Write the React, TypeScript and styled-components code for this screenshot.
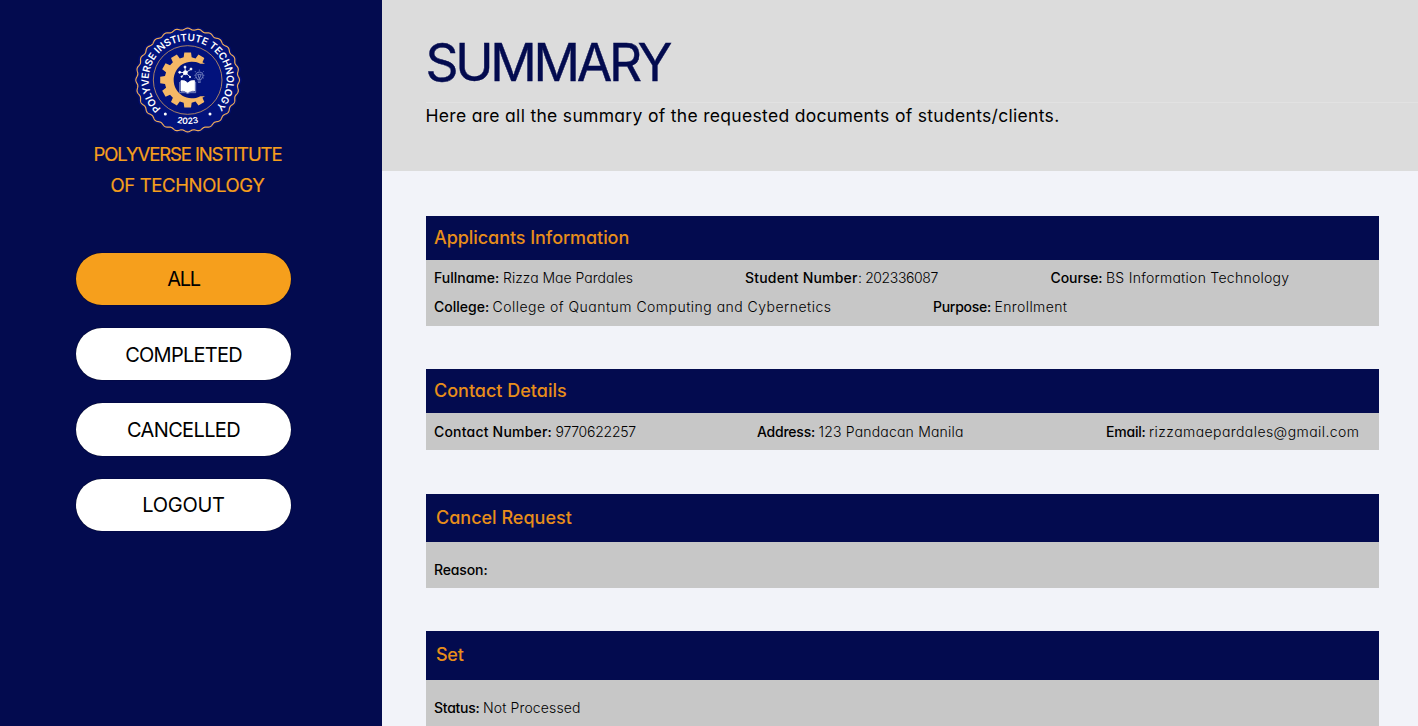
import React from "react";
import styled, { createGlobalStyle } from "styled-components";

const navy = "#030b4f";
const orange = "#f69f1c";

const GlobalStyle = createGlobalStyle`
  * { box-sizing: border-box; }
  body {
    margin: 0;
    background: #f2f3f9;
    font-family: Inter, "Liberation Sans", sans-serif;
    font-feature-settings: "cv11";
    color: #000;
    overflow: hidden;
  }
`;

const Page = styled.div`
  display: flex;
  height: 726px;
  overflow: hidden;
`;

const Sidebar = styled.aside`
  flex: 0 0 382px;
  display: flex;
  flex-direction: column;
  align-items: center;
  padding: 20px 7px 0 0;
  background: ${navy};
`;

const Seal = styled.svg`
  width: 125px;
  height: 118px;
  display: block;
`;

const SchoolName = styled.h2`
  margin: 1px 0 0;
  font-size: 18.5px;
  font-weight: 400;
  line-height: 30.5px;
  color: ${orange};
  -webkit-text-stroke: 0.2px ${orange};
`;

const NameLine = styled.span<{ $tracking: number }>`
  display: block;
  text-align: center;
  letter-spacing: ${(p) => p.$tracking}px;
`;

const Menu = styled.nav`
  display: flex;
  flex-direction: column;
  gap: 23px;
  margin: 52.5px 8px 0 0;
`;

const MenuButton = styled.button<{ $active?: boolean; $tracking: number }>`
  width: 215px;
  height: 52.4px;
  padding: 1px 0 0;
  border: 0;
  border-radius: 27px;
  background: ${(p) => (p.$active ? orange : "#fff")};
  box-shadow: 0 0 1px #000;
  color: #000;
  font: 400 20px Inter, sans-serif;
  letter-spacing: ${(p) => p.$tracking}px;
`;

const Main = styled.main`
  flex: 1;
  display: flex;
  flex-direction: column;
`;

const Banner = styled.header`
  height: 170.6px;
  flex: none;
  padding: 23px 0 0 43.5px;
  background: #dcdcdc;
`;

const Title = styled.h1`
  height: 80px;
  margin: 0;
  border-bottom: 1px solid #e2e2e2;
  font-size: 51.5px;
  font-weight: 400;
  line-height: 79px;
  letter-spacing: -3.3px;
  color: ${navy};
  -webkit-text-stroke: 0.4px ${navy};
`;

const Subtitle = styled.p`
  margin: 0;
  font-size: 17.5px;
  line-height: 26px;
  letter-spacing: 0.31px;
`;

const Sections = styled.div`
  display: flex;
  flex-direction: column;
  gap: 43.3px;
  padding: 45px 39.5px 0 43.5px;
`;

const Card = styled.section`
  display: flex;
  flex-direction: column;
  flex: none;
  background: #c7c7c7;
`;

const CardTitle = styled.h3<{ $tall?: boolean; $tracking?: number }>`
  height: ${(p) => (p.$tall ? 48.6 : 44)}px;
  margin: 0;
  padding-left: ${(p) => (p.$tall ? 10.5 : 8.5)}px;
  background: ${navy};
  font-size: 18px;
  font-weight: 500;
  line-height: ${(p) => (p.$tall ? 48.6 : 44)}px;
  letter-spacing: ${(p) => p.$tracking ?? 0}px;
  color: #e88e1a;
`;

const CardBody = styled.div<{ $height: number; $top: number }>`
  height: ${(p) => p.$height}px;
  padding: ${(p) => p.$top}px 0 0 8.5px;
`;

const Row = styled.div<{ $columns?: string }>`
  display: grid;
  grid-template-columns: ${(p) => p.$columns ?? "1fr"};
  height: 29px;
  line-height: 29px;
  font-size: 14px;
`;

const Item = styled.div`
  display: flex;
  white-space: nowrap;
`;

const Label = styled.strong<{ $width: number; $tracking: number }>`
  width: ${(p) => p.$width}px;
  font-weight: 500;
  letter-spacing: ${(p) => p.$tracking}px;
`;

const Value = styled.span<{ $tracking: number }>`
  font-weight: 300;
  letter-spacing: ${(p) => p.$tracking}px;
`;

type FieldProps = {
  label: string;
  width: number;
  labelTracking?: number;
  value?: string;
  tracking?: number;
};

function Field({ label, width, labelTracking = 0, value, tracking = 0 }: FieldProps) {
  return (
    <Item>
      <Label $width={width} $tracking={labelTracking}>{label}</Label>
      {value && <Value $tracking={tracking}>{value}</Value>}
    </Item>
  );
}

const CX = 188;
const CY = 180;

function polar(r: number, deg: number) {
  const a = (deg * Math.PI) / 180;
  return `${(CX + r * Math.cos(a)).toFixed(1)} ${(CY + r * Math.sin(a)).toFixed(1)}`;
}

function wavyRing(radius: number, amplitude: number, waves: number) {
  const points: string[] = [];
  for (let i = 0; i < 720; i++) {
    const deg = i / 2;
    points.push(polar(radius + amplitude * Math.cos((waves * deg * Math.PI) / 180), deg));
  }
  return `M${points.join("L")}Z`;
}

function gear() {
  const points: string[] = [];
  for (let t = 60; t <= 300; t += 30) {
    points.push(polar(69, t - 10), polar(83, t - 7), polar(83, t + 7), polar(69, t + 10));
  }
  return `M240 229L${points.join("L")}L240 131L226 131A55 55 0 1 0 226 229Z`;
}

function SchoolSeal() {
  return (
    <Seal viewBox="0 0 375 354">
      <path d={wavyRing(156, 2.5, 28)} fill="#02127c" stroke="#020d68" strokeWidth="8" />
      <path d={wavyRing(153, 2.5, 28)} fill="none" stroke="#eba95a" strokeWidth="3.6" />
      <circle cx={CX} cy={CY} r="103" fill="none" stroke="#b98c62" strokeWidth="2.7" />
      <path id="ring" d={`M${polar(117, 133)}A117 117 0 1 1 ${polar(117, 52)}`} fill="none" />
      <path id="base" d={`M${polar(132, 120)}A132 132 0 0 0 ${polar(132, 60)}`} fill="none" />
      <text fill="#fff" fontSize="30" fontWeight="600">
        <textPath href="#ring" textLength="553" lengthAdjust="spacing">POLYVERSE INSTITUTE TECHNOLOGY</textPath>
      </text>
      <text fill="#fff" fontSize="26" fontWeight="600" textAnchor="middle">
        <textPath href="#base" startOffset="50%">2023</textPath>
      </text>
      <circle cx="121" cy="282" r="4.5" fill="#fff" />
      <circle cx="255" cy="282" r="4.5" fill="#fff" />
      <path d={gear()} fill="#f5b866" />
      <g stroke="#fff" strokeWidth="2.5" fill="#fff">
        <path d="M181 158L180 141M181 158L198 148M181 158L165 157M181 158L170 170M181 158L195 170" />
        <circle cx="181" cy="158" r="6" />
        <circle cx="180" cy="141" r="3" />
        <circle cx="198" cy="147" r="3" />
        <circle cx="164" cy="157" r="3" />
        <circle cx="170" cy="170" r="2" />
        <circle cx="195" cy="171" r="2" />
        <path d="M168 182Q180 180 188 189Q197 180 209 182V213Q197 211 188 218Q179 211 168 213Z" />
      </g>
      <path d="M164 186V218H181Q188 223 195 218H212V186" fill="none" stroke="#a8b3dc" strokeWidth="2" />
      <g fill="none" stroke="#a8b3dc" strokeWidth="2">
        <path d="M217 178Q210 168 213 161Q223 151 233 161Q237 168 229 178ZM218 183H228M219 187H227M219 165L223 176L228 165M217 163H230" />
        <path d="M223 153V149M213 157L209 153M233 157L237 153M211 166H207M235 166H239M213 172L209 175M233 172L237 175" strokeDasharray="2 1" />
      </g>
    </Seal>
  );
}

export default function App() {
  return (
    <Page>
      <GlobalStyle />
      <Sidebar>
        <SchoolSeal />
        <SchoolName>
          <NameLine $tracking={-1.1}>POLYVERSE INSTITUTE</NameLine>
          <NameLine $tracking={-0.35}>OF TECHNOLOGY</NameLine>
        </SchoolName>
        <Menu>
          <MenuButton $active $tracking={-1.3}>ALL</MenuButton>
          <MenuButton $tracking={-0.75}>COMPLETED</MenuButton>
          <MenuButton $tracking={-0.65}>CANCELLED</MenuButton>
          <MenuButton $tracking={-0.25}>LOGOUT</MenuButton>
        </Menu>
      </Sidebar>
      <Main>
        <Banner>
          <Title>SUMMARY</Title>
          <Subtitle>Here are all the summary of the requested documents of students/clients.</Subtitle>
        </Banner>
        <Sections>
          <Card>
            <CardTitle $tracking={-0.06}>Applicants Information</CardTitle>
            <CardBody $height={66} $top={3.8}>
              <Row $columns="311px 305.5px 1fr">
                <Field label="Fullname:" width={69} value="Rizza Mae Pardales" />
                <Field label="Student Number" width={113} labelTracking={0.2} value=": 202336087" tracking={-0.38} />
                <Field label="Course:" width={55.5} labelTracking={-0.08} value="BS Information Technology" tracking={0.27} />
              </Row>
              <Row $columns="499px 1fr">
                <Field label="College:" width={58.5} value="College of Quantum Computing and Cybernetics" tracking={0.48} />
                <Field label="Purpose:" width={61.5} labelTracking={-0.27} value="Enrollment" tracking={0.4} />
              </Row>
            </CardBody>
          </Card>
          <Card>
            <CardTitle>Contact Details</CardTitle>
            <CardBody $height={37.5} $top={4.5}>
              <Row $columns="323px 349px 1fr">
                <Field label="Contact Number:" width={121.5} labelTracking={0.2} value="9770622257" tracking={-0.25} />
                <Field label="Address:" width={61.5} labelTracking={-0.23} value="123 Pandacan Manila" tracking={0.19} />
                <Field label="Email:" width={43} labelTracking={-0.2} value="rizzamaepardales@gmail.com" tracking={0.43} />
              </Row>
            </CardBody>
          </Card>
          <Card>
            <CardTitle $tall>Cancel Request</CardTitle>
            <CardBody $height={45.6} $top={13}>
              <Row><Field label="Reason:" width={57} labelTracking={-0.13} /></Row>
            </CardBody>
          </Card>
          <Card>
            <CardTitle $tall $tracking={-0.28}>Set</CardTitle>
            <CardBody $height={60} $top={12.8}>
              <Row><Field label="Status:" width={49} labelTracking={-0.26} value="Not Processed" tracking={0.13} /></Row>
            </CardBody>
          </Card>
        </Sections>
      </Main>
    </Page>
  );
}
